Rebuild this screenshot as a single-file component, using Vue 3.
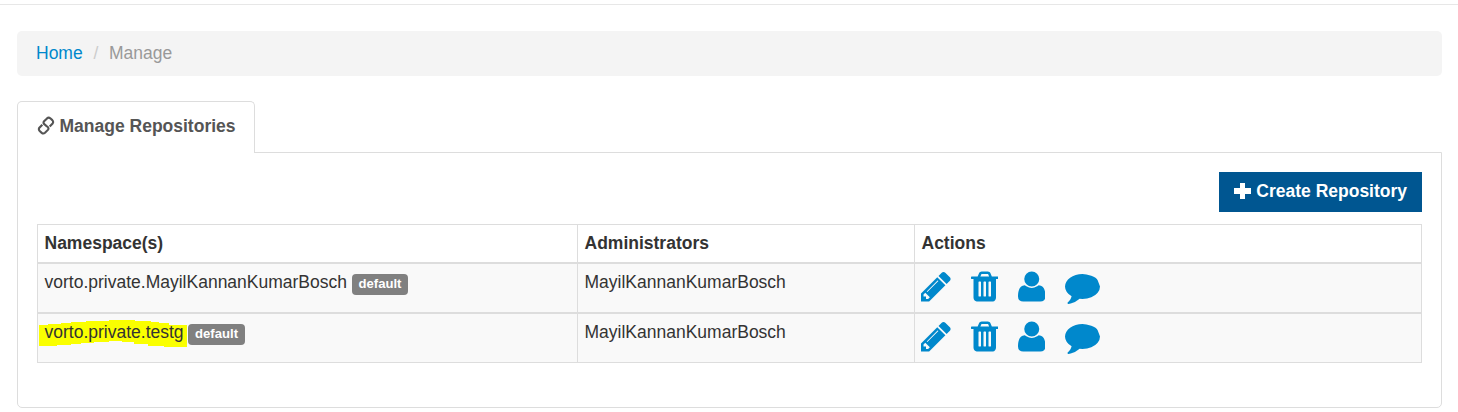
<script setup>
const icons = [
  { name: 'pencil', w: 1536, d: 'M363 0l91 91l-235 235l-91 -91v-107h128v-128h107zM886 928q0 22 -22 22q-10 0 -17 -7l-542 -542q-7 -7 -7 -17q0 -22 22 -22q10 0 17 7l542 542q7 7 7 17zM832 1120l416 -416l-832 -832h-416v416zM1515 1024q0 -53 -37 -90l-166 -166l-416 416l166 165q36 38 90 38q53 0 91 -38l235 -234q37 -39 37 -91z' },
  { name: 'trash', w: 1408, d: 'M512 160v704q0 14 -9 23t-23 9h-64q-14 0 -23 -9t-9 -23v-704q0 -14 9 -23t23 -9h64q14 0 23 9t9 23zM768 160v704q0 14 -9 23t-23 9h-64q-14 0 -23 -9t-9 -23v-704q0 -14 9 -23t23 -9h64q14 0 23 9t9 23zM1024 160v704q0 14 -9 23t-23 9h-64q-14 0 -23 -9t-9 -23v-704q0 -14 9 -23t23 -9h64q14 0 23 9t9 23zM480 1152h448l-48 117q-7 9 -17 11h-317q-10 -2 -17 -11zM1408 1120v-64q0 -14 -9 -23t-23 -9h-96v-948q0 -83 -47 -143.5t-113 -60.5h-832q-66 0 -113 58.5t-47 141.5v952h-96q-14 0 -23 9t-9 23v64q0 14 9 23t23 9h309l70 167q15 37 54 63t79 26h320q40 0 79 -26t54 -63l70 -167h309q14 0 23 -9t9 -23z' },
  { name: 'user', w: 1408, d: 'M1408 131q0 -120 -73 -189.5t-194 -69.5h-874q-121 0 -194 69.5t-73 189.5q0 53 3.5 103.5t14 109t26.5 108.5t43 97.5t62 81t85.5 53.5t111.5 20q9 0 42 -21.5t74.5 -48t108 -48t133.5 -21.5t133.5 21.5t108 48t74.5 48t42 21.5q61 0 111.5 -20t85.5 -53.5t62 -81t43 -97.5t26.5 -108.5t14 -109t3.5 -103.5zM1088 1024q0 -159 -112.5 -271.5t-271.5 -112.5t-271.5 112.5t-112.5 271.5t112.5 271.5t271.5 112.5t271.5 -112.5t112.5 -271.5z' },
  { name: 'comment', w: 1792, d: 'M1792 640q0 -174 -120 -321.5t-326 -233t-450 -85.5q-70 0 -145 8q-198 -175 -460 -242q-49 -14 -114 -22q-17 -2 -30.5 9t-17.5 29v1q-3 4 -0.5 12t2 10t4.5 9.5l6 9t7 8.5t8 9q7 8 31 34.5t34.5 38t31 39.5t32.5 51t27 59t26 76q-157 89 -247.5 220t-90.5 281q0 130 71 248.5t191 204.5t286 136.5t348 50.5t450 -85.5t326 -233t120 -321.5z' },
]
const rows = [
  { ns: 'vorto.private.MayilKannanKumarBosch', admin: 'MayilKannanKumarBosch', marked: false },
  { ns: 'vorto.private.testg', admin: 'MayilKannanKumarBosch', marked: true },
]
</script>

<template>
  <div class="page">
    <nav class="breadcrumb">
      <a class="home">Home</a><span class="sep">/</span><span>Manage</span>
    </nav>
    <div class="tabs">
      <div class="tab">
        <svg class="link" viewBox="0 0 18 20" width="18" height="20">
          <g fill="none" stroke="#555" stroke-width="2.1">
            <path d="M9.200 9.700L7 7.900Q6 6.600 7.100 5.300L10 2.400Q11.600 1 13.300 2.300L15.300 4.100Q16.800 5.700 15.600 7.500L12.700 10.500" />
            <path d="M8.800 9.500L11 11.300Q12 12.600 10.900 13.900L8 16.800Q6.400 18.200 4.700 16.900L2.700 15.100Q1.200 13.500 2.400 11.700L5.300 8.700" />
          </g>
        </svg>
        <span>Manage Repositories</span>
      </div>
    </div>
    <section class="panel">
      <div class="toolbar">
        <button class="create">
          <svg class="plus" viewBox="0 0 17 17" width="17" height="17"><path fill="#fff" d="M6 0h5v5h6v6h-6v5H6V11H0V5h6z" /></svg>
          <span>Create Repository</span>
        </button>
      </div>
      <div class="table">
        <div class="row head">
          <div class="cell">Namespace(s)</div>
          <div class="cell">Administrators</div>
          <div class="cell">Actions</div>
        </div>
        <div v-for="r in rows" :key="r.ns" class="row body">
          <div class="cell">
            <span class="ns">
              <svg v-if="r.marked" class="marker" viewBox="0 0 148 29" width="148" height="29"><path fill="#faff00" d="M0 5H9V4H22V3H32V2H47V1H70V0H96V1H112V2H120V3H130V5H148V27H125V26H109V24H95V22H83V21H70V22H55V23H42V24H32V25H18V26H0z" /></svg>
              <span class="ns-text">{{ r.ns }}</span>
            </span>
            <span class="badge">default</span>
          </div>
          <div class="cell">{{ r.admin }}</div>
          <div class="cell actions">
            <svg v-for="i in icons" :key="i.name" :viewBox="`0 -1536 ${i.w} 1792`" :width="i.w * 35 / 1792" height="35">
              <path transform="scale(1,-1)" fill="#0088cc" :d="i.d" />
            </svg>
          </div>
        </div>
      </div>
    </section>
  </div>
</template>

<style>
body { margin: 0; background: #fff; overflow: hidden; }
</style>

<style scoped>
* { box-sizing: border-box; }
.page {
  height: 408px;
  margin-top: 4px;
  padding: 26px 16px 0 17px;
  border-top: 1px solid #e7e7e7;
  font: 17.5px/25px "Liberation Sans", Arial, sans-serif;
  color: #333;
}
.breadcrumb {
  height: 45px;
  padding: 10px 19px;
  border-radius: 5px;
  background: #f4f4f4;
  color: #999;
}
.home { color: #08c; }
.sep { color: #ccc; padding: 0 10.7px; }
.tabs { display: flex; margin-top: 25px; }
.tab {
  display: flex;
  width: 238px;
  height: 52px;
  margin-bottom: -1px;
  padding: 12px 0 0 19px;
  border: 1px solid #ddd;
  border-bottom: 0;
  border-radius: 5px 5px 0 0;
  background: #fff;
  color: #555;
  font-weight: bold;
  position: relative;
  z-index: 1;
}
.link { margin: 2px 4.500px 0 0; }
.panel {
  height: 256px;
  padding: 19px;
  border: 1px solid #ddd;
  border-radius: 0 0 5px 5px;
}
.toolbar { display: flex; justify-content: flex-end; }
.create {
  display: flex;
  width: 203px;
  height: 40px;
  padding: 7px 0 0 15px;
  border: 0;
  background: #005691;
  color: #fff;
  font: bold 17.5px/25px "Liberation Sans", Arial, sans-serif;
}
.plus { margin: 4px 5.300px 0 0; }
.table { margin-top: 12px; border: 1px solid #ddd; }
.row { display: grid; grid-template-columns: 539px 337px 1fr; }
.head { height: 37px; font-weight: bold; }
.body { height: 50px; border-top: 2px solid #ddd; background: #f9f9f9; }
.cell { padding: 6px 6.500px 0; white-space: nowrap; }
.cell + .cell { border-left: 1px solid #ddd; }
.ns { position: relative; }
.ns-text { position: relative; }
.marker { position: absolute; left: -5.500px; top: -2px; }
.badge {
  display: inline-block;
  height: 21px;
  margin-left: 4.700px;
  padding: 0 6.800px;
  border-radius: 4px;
  background: #808080;
  color: #fff;
  font-size: 13.1px;
  font-weight: bold;
  line-height: 19px;
  vertical-align: top;
  position: relative;
  top: 4px;
}
.cell.actions { display: flex; gap: 19.5px; padding: 5px 0 0 6.100px; }
</style>
